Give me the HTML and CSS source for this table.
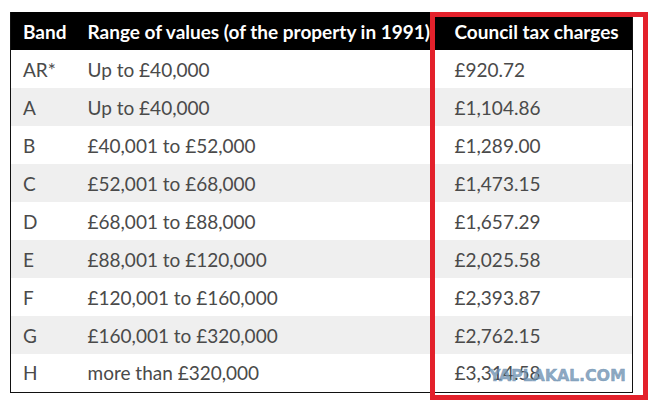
FILE: index.html
```html
<!DOCTYPE html>
<html>
<head>
<meta charset="utf-8">
<link rel="stylesheet" href="styles.css">
</head>
<body>
<div class="wrap">
  <table class="tax">
    <colgroup>
      <col class="c-band">
      <col class="c-range">
      <col class="c-charge">
    </colgroup>
    <thead>
      <tr><th>Band</th><th>Range of values (of the property in 1991)</th><th>Council tax charges</th></tr>
    </thead>
    <tbody>
      <tr><td>AR*</td><td>Up to £40,000</td><td>£920.72</td></tr>
      <tr><td>A</td><td>Up to £40,000</td><td>£1,104.86</td></tr>
      <tr><td>B</td><td>£40,001 to £52,000</td><td>£1,289.00</td></tr>
      <tr><td>C</td><td>£52,001 to £68,000</td><td>£1,473.15</td></tr>
      <tr><td>D</td><td>£68,001 to £88,000</td><td>£1,657.29</td></tr>
      <tr><td>E</td><td>£88,001 to £120,000</td><td>£2,025.58</td></tr>
      <tr><td>F</td><td>£120,001 to £160,000</td><td>£2,393.87</td></tr>
      <tr><td>G</td><td>£160,001 to £320,000</td><td>£2,762.15</td></tr>
      <tr><td>H</td><td>more than £320,000</td><td>£3,314.58</td></tr>
    </tbody>
  </table>
  <div class="highlight"></div>
  <div class="watermark">YAPLAKAL.COM</div>
</div>
</body>
</html>
```
FILE: styles.css
```css
html, body {
  margin: 0;
  padding: 0;
  background: #ffffff;
}
body {
  font-family: Lato, "Liberation Sans", sans-serif;
}
.wrap {
  position: relative;
  padding: 12px 0 0 10px;
  width: 641px;
  height: 393px;
}
.tax {
  border-collapse: collapse;
  table-layout: fixed;
  width: 622px;
  border-left: 1px solid #111;
  border-right: 1px solid #111;
  border-bottom: 1px solid #111;
}
.c-band { width: 65px; }
.c-range { width: 367px; }
.c-charge { width: 190px; }
.tax th {
  background: #000;
  color: #fff;
  font-weight: 700;
  font-size: 19px;
  text-align: left;
  height: 38px;
  padding: 0 0 0 12px;
  white-space: nowrap;
  overflow: hidden;
  box-sizing: border-box;
}
.tax td {
  height: 38px;
  padding: 0 0 0 12px;
  font-size: 19px;
  color: #4a4a4a;
  box-sizing: border-box;
  white-space: nowrap;
}
.tax tbody tr:nth-child(even) td {
  background: #efefef;
}
.highlight {
  position: absolute;
  left: 430px;
  top: 12px;
  width: 218px;
  height: 388px;
  border: 5px solid #e3212b;
  box-sizing: border-box;
}
.watermark {
  position: absolute;
  left: 489px;
  top: 366px;
  font-family: "DejaVu Sans", sans-serif;
  font-weight: 700;
  font-size: 16px;
  letter-spacing: -0.2px;
  color: rgba(110, 145, 178, 0.8);
  -webkit-text-stroke: 0.4px rgba(110, 145, 178, 0.8);
}
```
